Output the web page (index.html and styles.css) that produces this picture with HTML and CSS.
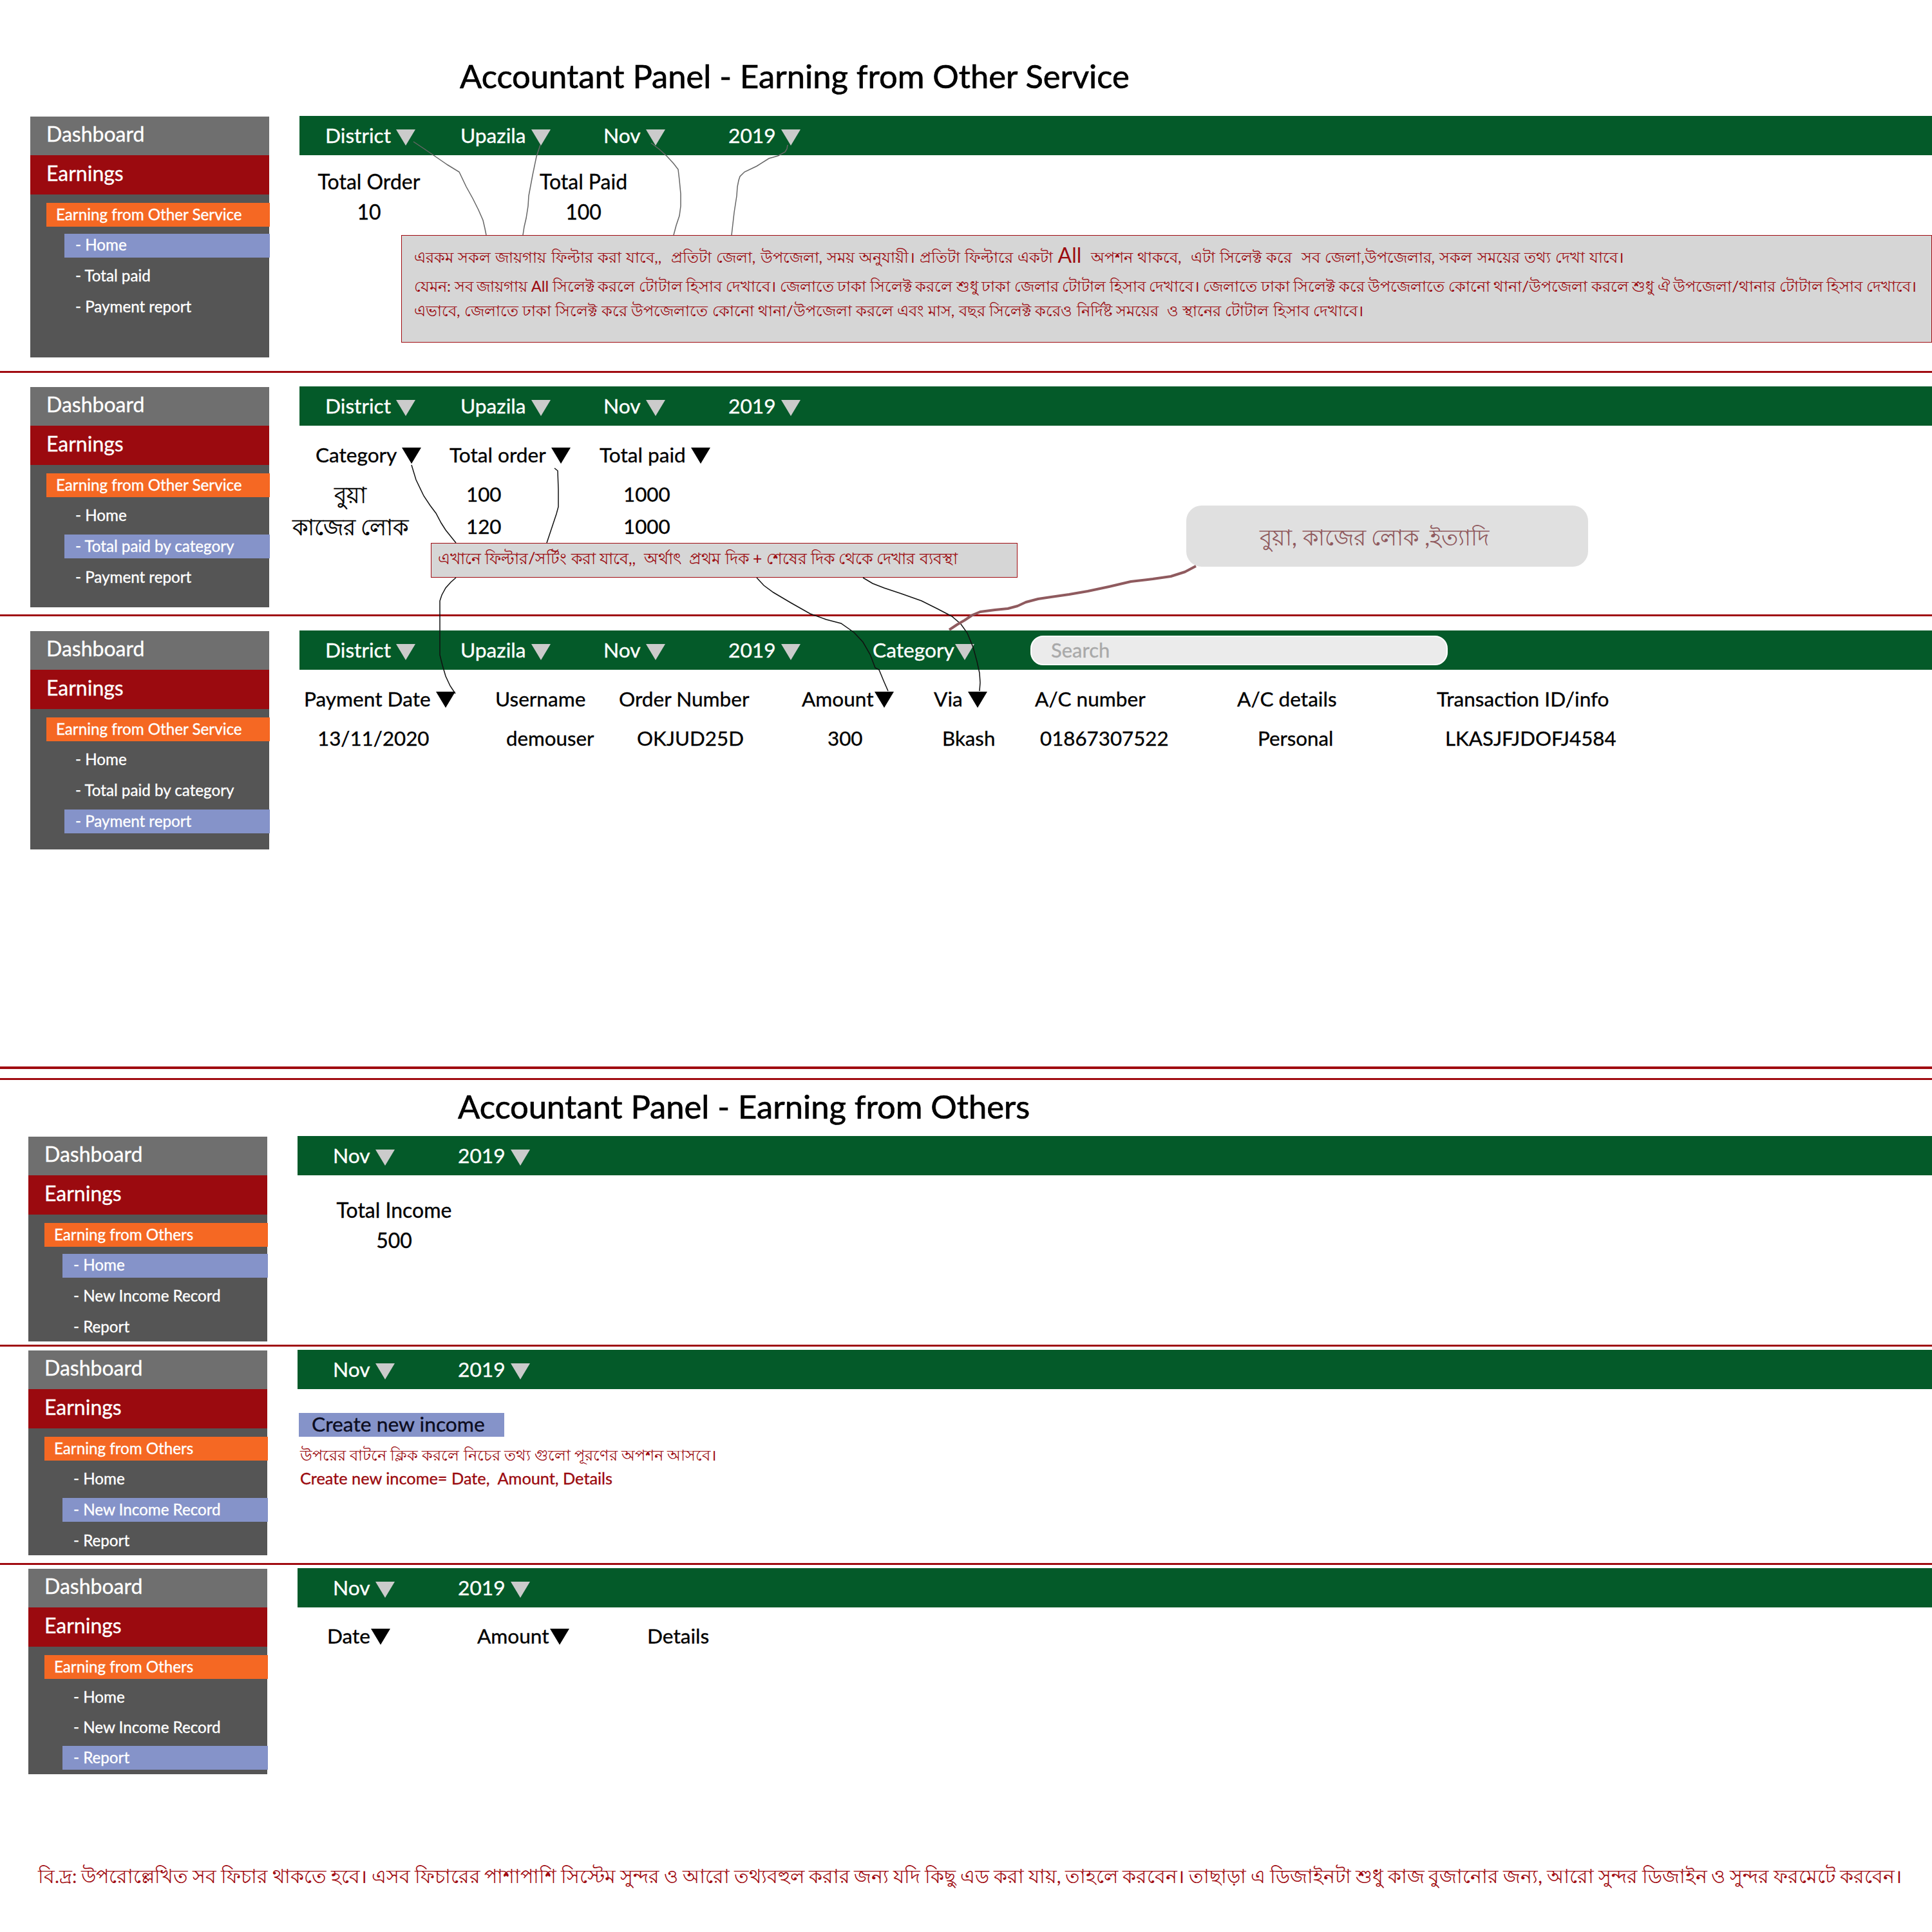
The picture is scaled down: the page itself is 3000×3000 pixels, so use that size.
FILE: index.html
```html
<!DOCTYPE html>
<html lang="en">
<head>
<meta charset="utf-8">
<title>Accountant Panel</title>
<link rel="stylesheet" href="styles.css">
</head>
<body>
<div class="canvas">

  <h1 class="title title-first">Accountant Panel - Earning from Other Service</h1>

  <section class="panel panel-a">
    <aside class="side pad-a">
      <div class="side-head">Dashboard</div>
      <div class="side-earn">Earnings</div>
      <nav class="side-body">
        <div class="nav-top">Earning from Other Service</div>
        <div class="nav-sub on">- Home</div>
        <div class="nav-sub">- Total paid</div>
        <div class="nav-sub">- Payment report</div>
      </nav>
    </aside>
    <div class="main">
      <div class="bar bar-geo">
        <div class="filter"><span>District</span><i class="tri"></i></div>
        <div class="filter"><span>Upazila</span><i class="tri"></i></div>
        <div class="filter"><span>Nov</span><i class="tri"></i></div>
        <div class="filter"><span>2019</span><i class="tri"></i></div>
      </div>
      <div class="stats stats-a">
        <div>Total Order</div><div>Total Paid</div>
        <div>10</div><div>100</div>
      </div>
    </div>
  </section>
  <hr class="rule">

  <section class="panel panel-b">
    <aside class="side pad-b">
      <div class="side-head">Dashboard</div>
      <div class="side-earn">Earnings</div>
      <nav class="side-body">
        <div class="nav-top">Earning from Other Service</div>
        <div class="nav-sub">- Home</div>
        <div class="nav-sub on">- Total paid by category</div>
        <div class="nav-sub">- Payment report</div>
      </nav>
    </aside>
    <div class="main">
      <div class="bar bar-geo">
        <div class="filter"><span>District</span><i class="tri"></i></div>
        <div class="filter"><span>Upazila</span><i class="tri"></i></div>
        <div class="filter"><span>Nov</span><i class="tri"></i></div>
        <div class="filter"><span>2019</span><i class="tri"></i></div>
      </div>
      <div class="table table-cat">
        <div class="th th-cat"><span>Category</span><i class="tri tri-dark"></i></div>
        <div class="th"><span>Total order</span><i class="tri tri-dark"></i></div>
        <div class="th"><span>Total paid</span><i class="tri tri-dark"></i></div>
        <div class="td cat-name">বুয়া</div><div class="td cat-order">100</div><div class="td cat-paid">1000</div>
        <div class="td cat-name">কাজের লোক</div><div class="td cat-order">120</div><div class="td cat-paid">1000</div>
      </div>
    </div>
  </section>
  <hr class="rule">

  <section class="panel panel-c">
    <aside class="side pad-c">
      <div class="side-head">Dashboard</div>
      <div class="side-earn">Earnings</div>
      <nav class="side-body">
        <div class="nav-top">Earning from Other Service</div>
        <div class="nav-sub">- Home</div>
        <div class="nav-sub">- Total paid by category</div>
        <div class="nav-sub on">- Payment report</div>
      </nav>
    </aside>
    <div class="main">
      <div class="bar bar-geo">
        <div class="filter"><span>District</span><i class="tri"></i></div>
        <div class="filter"><span>Upazila</span><i class="tri"></i></div>
        <div class="filter"><span>Nov</span><i class="tri"></i></div>
        <div class="filter"><span>2019</span><i class="tri"></i></div>
        <div class="filter"><span>Category</span><i class="tri tri-tight"></i></div>
        <div class="search">Search</div>
      </div>
      <div class="table table-pay">
        <div class="th"><span>Payment Date</span><i class="tri tri-dark"></i></div>
        <div class="th">Username</div>
        <div class="th">Order Number</div>
        <div class="th"><span>Amount</span><i class="tri tri-dark tri-tight"></i></div>
        <div class="th"><span>Via</span><i class="tri tri-dark"></i></div>
        <div class="th">A/C number</div>
        <div class="th">A/C details</div>
        <div class="th">Transaction ID/info</div>
        <div class="td pv1">13/11/2020</div>
        <div class="td pv2">demouser</div>
        <div class="td pv3">OKJUD25D</div>
        <div class="td pv4">300</div>
        <div class="td pv5">Bkash</div>
        <div class="td pv6">01867307522</div>
        <div class="td pv7">Personal</div>
        <div class="td pv8">LKASJFJDOFJ4584</div>
      </div>
    </div>
  </section>
  <hr class="rule rule-thick">
  <hr class="rule rule-second">

  <h1 class="title title-second">Accountant Panel - Earning from Others</h1>

  <section class="panel panel-d alt">
    <aside class="side pad-d">
      <div class="side-head">Dashboard</div>
      <div class="side-earn">Earnings</div>
      <nav class="side-body">
        <div class="nav-top">Earning from Others</div>
        <div class="nav-sub on">- Home</div>
        <div class="nav-sub">- New Income Record</div>
        <div class="nav-sub">- Report</div>
      </nav>
    </aside>
    <div class="main">
      <div class="bar bar-time">
        <div class="filter"><span>Nov</span><i class="tri"></i></div>
        <div class="filter"><span>2019</span><i class="tri"></i></div>
      </div>
      <div class="stats stats-d">
        <div>Total Income</div>
        <div>500</div>
      </div>
    </div>
  </section>
  <hr class="rule">

  <section class="panel panel-e alt">
    <aside class="side pad-e">
      <div class="side-head">Dashboard</div>
      <div class="side-earn">Earnings</div>
      <nav class="side-body">
        <div class="nav-top">Earning from Others</div>
        <div class="nav-sub">- Home</div>
        <div class="nav-sub on">- New Income Record</div>
        <div class="nav-sub">- Report</div>
      </nav>
    </aside>
    <div class="main">
      <div class="bar bar-time">
        <div class="filter"><span>Nov</span><i class="tri"></i></div>
        <div class="filter"><span>2019</span><i class="tri"></i></div>
      </div>
      <div class="create">Create new income</div>
      <p class="hint hint-bn">উপরের বাটনে ক্লিক করলে নিচের তথ্য গুলো পূরণের অপশন আসবে।</p>
      <p class="hint hint-en">Create new income= Date,&nbsp; Amount, Details</p>
    </div>
  </section>
  <hr class="rule">

  <section class="panel panel-f alt">
    <aside class="side pad-f">
      <div class="side-head">Dashboard</div>
      <div class="side-earn">Earnings</div>
      <nav class="side-body">
        <div class="nav-top">Earning from Others</div>
        <div class="nav-sub">- Home</div>
        <div class="nav-sub">- New Income Record</div>
        <div class="nav-sub on">- Report</div>
      </nav>
    </aside>
    <div class="main">
      <div class="bar bar-time">
        <div class="filter"><span>Nov</span><i class="tri"></i></div>
        <div class="filter"><span>2019</span><i class="tri"></i></div>
      </div>
      <div class="table table-inc">
        <div class="th"><span>Date</span><i class="tri tri-dark tri-tight"></i></div>
        <div class="th"><span>Amount</span><i class="tri tri-dark tri-tight"></i></div>
        <div class="th">Details</div>
      </div>
    </div>
  </section>

  <p class="footnote">বি.দ্র: উপরোল্লেখিত সব ফিচার থাকতে হবে। এসব ফিচারের পাশাপাশি সিস্টেম সুন্দর ও আরো তথ্যবহুল করার জন্য যদি কিছু এড করা যায়, তাহলে করবেন। তাছাড়া এ ডিজাইনটা শুধু কাজ বুজানোর জন্য, আরো সুন্দর ডিজাইন ও সুন্দর ফরমেটে করবেন।</p>

  <div class="note note-filter">
    <p class="line-one">এরকম সকল জায়গায় ফিল্টার করা যাবে,,&nbsp; প্রতিটা জেলা, উপজেলা, সময় অনুযায়ী। প্রতিটা ফিল্টারে একটা <span class="all">All</span>&nbsp; অপশন থাকবে,&nbsp; এটা সিলেক্ট করে&nbsp; সব জেলা,উপজেলার, সকল সময়ের তথ্য দেখা যাবে।</p>
    <p class="line-two">যেমন: সব জায়গায় All সিলেক্ট করলে টোটাল হিসাব দেখাবে। জেলাতে ঢাকা সিলেক্ট করলে শুধু ঢাকা জেলার টোটাল হিসাব দেখাবে। জেলাতে ঢাকা সিলেক্ট করে উপজেলাতে কোনো থানা/উপজেলা করলে শুধু ঐ উপজেলা/থানার টোটাল হিসাব দেখাবে।</p>
    <p class="line-three">এভাবে, জেলাতে ঢাকা সিলেক্ট করে উপজেলাতে কোনো থানা/উপজেলা করলে এবং মাস, বছর সিলেক্ট করেও নির্দিষ্ট সময়ের&nbsp; ও স্থানের টোটাল হিসাব দেখাবে।</p>
  </div>

  <div class="note note-sort">এখানে ফিল্টার/সর্টিং করা যাবে,,&nbsp; অর্থাৎ&nbsp; প্রথম দিক + শেষের দিক থেকে দেখার ব্যবস্থা</div>

  <div class="callout">বুয়া, কাজের লোক ,ইত্যাদি</div>

  <svg class="wires" viewBox="0 0 3000 3000" aria-hidden="true">
    <g class="wire-grey">
      <polyline points="642,220 660,232 676,243 695,256 713,267 724,290 734,308 743,326 750,342 753,355 755,365"/>
      <polyline points="839,225 833,243 827,272 821,304 820,320 817,339 814,352 812,365"/>
      <polyline points="1011,222 1024,232 1036,243 1046,254 1053,263 1055,280 1057,301 1057,320 1055,335 1050,350 1046,365"/>
      <polyline points="1223,225 1222,231 1219,236 1208,242 1194,246 1175,258 1156,267 1149,274 1147,280 1145,290 1144,304 1140,330 1136,365"/>
    </g>
    <g class="wire-dark">
      <polyline points="639,722 646,745 658,770 668,785 677,797 685,812 692,823 700,833 708,843"/>
      <polyline points="861,727 866,731 867,760 867,787 864,798 861,807 855,825 849,843"/>
      <polyline points="708,897 700,904 692,913 686,924 683,933 683,960 683,1017 687,1033 692,1050 699,1065 707,1077"/>
      <polyline points="1175,897 1186,909 1201,920 1228,936 1258,953 1283,962 1306,968 1326,982 1340,997 1351,1016 1359,1037 1365,1040 1372,1057 1379,1073"/>
      <polyline points="1340,897 1355,906 1373,913 1400,922 1431,933 1455,945 1478,957 1492,969 1502,983 1511,1005 1517,1027 1521,1045 1522,1060 1521,1073"/>
    </g>
    <polyline class="wire-brown" points="1857,879 1840,888 1818,895 1790,899 1756,903 1722,911 1689,918 1660,923 1632,927 1612,930 1593,935 1580,941 1565,945 1545,947 1522,950 1510,955 1498,963 1486,970 1474,978"/>
  </svg>
</div>
</body>
</html>
```

FILE: styles.css
```css
* { box-sizing: border-box; }

html, body { margin: 0; padding: 0; background: #fff; }

body {
  font-family: Lato, "Noto Sans", "Noto Sans CJK SC", sans-serif;
  color: #000;
  -webkit-text-stroke: .35px;
}

.canvas {
  position: relative;
  width: 3000px;
  height: 3000px;
  overflow: hidden;
}

/* titles */
.title {
  margin: 0;
  font-size: 50.7px;
  font-weight: 400;
  line-height: 60px;
  -webkit-text-stroke: .7px #000;
}
.title-first { height: 180px; padding: 88px 0 0 714px; }
.title-second { height: 87px; padding: 11px 0 0 711px; }

/* separators */
.rule { margin: 0; border: 0; height: 3px; background: #a00a10; }
.rule-thick { height: 4px; }
.rule-second { margin-top: 14px; }

/* panels */
.panel { display: flex; align-items: flex-start; gap: 47px; padding-left: 47px; }
.panel.alt { padding-left: 44px; }
.panel-a { height: 396px; }
.panel-b { height: 375px; padding-top: 21px; }
.panel-c { height: 699px; padding-top: 22px; }
.panel-d { height: 324px; }
.panel-e { height: 336px; padding-top: 5px; }
.panel-f { height: 500px; padding-top: 5px; }

/* sidebar */
.side { flex: 0 0 371px; margin-top: 1px; background: #555; color: #fff; }
.pad-a .side-body { padding-bottom: 60px; }
.pad-b .side-body { padding-bottom: 28px; }
.pad-c .side-body { padding-bottom: 25px; }
.pad-d .side-body { padding-bottom: 4px; }
.pad-e .side-body { padding-bottom: 4px; }
.pad-f .side-body { padding-bottom: 7px; gap: 10px; }

.side-head, .side-earn {
  display: flex;
  align-items: center;
  padding: 0 0 6px 25px;
  font-size: 32px;
}
.side-head { height: 60px; padding-bottom: 7px; background: #6f6f6f; }
.side-earn { height: 61px; background: #9b0a0f; }

.side-body { display: flex; flex-direction: column; gap: 10.7px; padding-top: 13px; font-size: 24.2px; }

.nav-top, .nav-sub {
  display: flex;
  align-items: center;
  height: 37px;
  margin-right: -1px;
  padding-bottom: 3px;
}
.nav-top { margin-left: 25px; padding-left: 15px; background: #f56823; }
.nav-sub { margin-left: 53px; padding-left: 17px; }
.nav-sub.on { background: #8593c9; }

/* filter bar */
.main { flex: 1; min-width: 0; }

.bar {
  display: grid;
  align-items: center;
  height: 61px;
  background: #045a29;
  color: #fff;
  font-size: 31.7px;
}
.bar-geo { grid-template-columns: 210px 222px 194px 224px 245px 648px; padding-left: 40px; }
.bar-time { grid-template-columns: 194px 194px; padding-left: 55px; }

.filter { display: flex; align-items: center; height: 100%; }
.filter span { padding-bottom: 2px; }

.tri {
  flex: none;
  width: 0;
  height: 0;
  margin: 6px 0 0 8px;
  border-left: 15px solid transparent;
  border-right: 15px solid transparent;
  border-top: 25px solid #cbcbcb;
}
.tri-dark { margin-top: 2px; border-top-color: #000; }
.tri-tight { margin-left: 1px; }

.search {
  height: 46px;
  padding-left: 30px;
  border: 2px solid #fff;
  border-radius: 20px;
  background: #ebebeb;
  color: #a9a9a9;
  font-size: 31px;
  line-height: 40px;
}

/* stat blocks */
.stats { display: grid; font-size: 32px; text-align: center; grid-auto-rows: 47px; align-items: center; }
.stats-a { margin-top: 17px; grid-template-columns: 216px 450px; }
.stats-d { margin-top: 30px; grid-template-columns: 300px; }

/* tables */
.table { display: grid; font-size: 31.6px; align-items: center; }
.th { display: flex; align-items: center; height: 48px; }
.td { height: 48px; font-size: 31.3px; line-height: 48px; white-space: nowrap; }

.table-cat {
  margin: 21px 0 0 -20px;
  grid-template-columns: 253px 233px 400px;
  grid-auto-rows: 48px;
  row-gap: 2px;
}
.th-cat { padding-left: 45px; }
.table-cat .td { position: relative; top: 11px; }
.table-cat .cat-name { width: 198px; text-align: center; font-size: 35px; }
.cat-order { padding-left: 26px; }
.cat-paid { padding-left: 37px; }

.table-pay {
  margin: 21px 0 0 7px;
  grid-template-columns: 297px 192px 284px 205px 157px 314px 310px 400px;
  grid-auto-rows: 48px;
  row-gap: 13px;
}
.pv1 { padding-left: 21px; }
.pv2 { padding-left: 17px; }
.pv3 { padding-left: 28px; }
.pv4 { padding-left: 40px; }
.pv5 { padding-left: 13px; }
.pv6 { padding-left: 8px; }
.pv7 { padding-left: 32px; }
.pv8 { padding-left: 13px; }

.table-inc {
  margin: 20px 0 0 46px;
  grid-template-columns: 233px 264px 200px;
}

/* create form hint */
.create {
  display: flex;
  align-items: center;
  width: 319px;
  height: 37px;
  margin: 37px 0 0 2px;
  padding: 0 0 3px 20px;
  background: #8593c9;
  color: #0c0c1e;
  font-size: 31.8px;
}
.hint { margin: 0 0 0 4px; color: #9b0a0f; line-height: 36px; }
.hint-bn { margin-top: 10px; font-size: 24px; -webkit-text-stroke: 0; }
.hint-en { font-size: 25.3px; }

/* footer note */
.footnote {
  position: absolute;
  top: 2893px;
  left: 0;
  margin: 0;
  padding: 0 0 0 59px;
  color: #a00a10;
  font-size: 29.7px;
  word-spacing: -.75px;
  line-height: 40px;
  white-space: nowrap;
  -webkit-text-stroke: 0;
}

/* annotations over the wireframe */
.note {
  position: absolute;
  border: 1px solid #a00a10;
  background: #d6d6d6;
  color: #9b0a0f;
  font-size: 24px;
  white-space: nowrap;
  -webkit-text-stroke: 0;
}
.note p { margin: 0; }
.note-filter { left: 623px; top: 365px; width: 2377px; height: 167px; padding: 13px 0 0 19px; line-height: 40px; }
.note .line-one { word-spacing: 1.1px; }
.note .line-two { margin-top: 5px; word-spacing: -.6px; }
.note .line-three { margin-top: -2px; word-spacing: .2px; }
.all { font-size: 32px; line-height: 32px; }
.note-sort { left: 669px; top: 843px; width: 911px; height: 54px; padding-left: 10px; font-size: 24.6px; line-height: 46px; }

.callout {
  position: absolute;
  left: 1842px;
  top: 785px;
  width: 624px;
  height: 95px;
  padding-right: 40px;
  border-radius: 24px;
  background: #e0e0e0;
  color: #8f5a5e;
  font-size: 34.5px;
  line-height: 98px;
  text-align: center;
  -webkit-text-stroke: 0;
}

.wires { position: absolute; left: 0; top: 0; width: 3000px; height: 3000px; pointer-events: none; fill: none; }
.wire-grey { stroke: #666; stroke-width: 1.5; }
.wire-dark { stroke: #111; stroke-width: 1.5; }
.wire-brown { stroke: #8f5a5e; stroke-width: 4; stroke-linejoin: round; }
```
